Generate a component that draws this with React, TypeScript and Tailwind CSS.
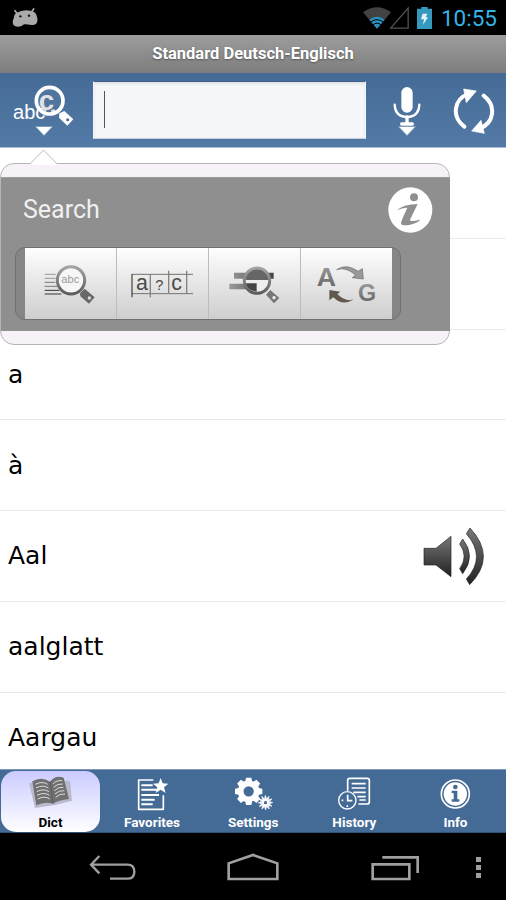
import type { ReactNode } from "react";

const words = ["", "", "a", "à", "Aal", "aalglatt", "Aargau"];

function StatusBar() {
  return (
    <div className="h-[35px] shrink-0 bg-black flex items-center pl-3 pr-[9px]">
      {/* robot head */}
      <svg className="w-[26px] h-[19px] mt-0" viewBox="0 0 78 57">
        <path d="M9 8L17 19M65 3L58 13" stroke="#aaa" strokeWidth="5" strokeLinecap="round" />
        <path d="M13 15Q34 3 58 9Q74 12 76 31Q79 52 59 51L42 49Q34 47 29 54Q13 59 5 52Q-1 41 6 29Q5 20 13 15Z" fill="#aaa" />
        <circle cx="25" cy="25" r="3.6" fill="#111" />
        <circle cx="51" cy="23" r="3.6" fill="#111" />
      </svg>

      <svg className="w-[28px] h-[22px] ml-auto" viewBox="0 0 84 66">
        <path d="M0 16Q42 -14 84 16L42 65Z" fill="#424242" />
        <path d="M19 38Q42 21 65 38L42 65Z" fill="#2c90bd" />
        <path d="M23 45Q42 31 61 45M29 54Q42 43 55 54" stroke="#000" strokeWidth="3" fill="none" />
      </svg>
      <svg className="w-[20px] h-[23px] -ml-[2px]" viewBox="0 0 60 69">
        <path d="M5 66.500L57.500 6V66.500Z" fill="none" stroke="#505050" strokeWidth="4" />
      </svg>
      <svg className="w-[15px] h-[22px] ml-2" viewBox="0 0 45 66">
        <path d="M13 0H32V5H45V66H0V5H13Z" fill="#3498bf" />
        <path d="M17 20H31L26 31H33L18 53L21 37H12Z" fill="#e8f4f8" />
      </svg>
      <span className="ml-[9px] text-[22.500px] leading-none text-[#33b5e5] mt-[1px]">10:55</span>
    </div>
  );
}

function DropArrow() {
  return (
    <svg className="w-[18px] h-[10px]" viewBox="0 0 54 30">
      <path d="M4 3H50L27 27Z" fill="#fff" stroke="#fff" strokeOpacity=".35" strokeWidth="4" />
    </svg>
  );
}

function Toolbar() {
  return (
    <div className="h-[75px] shrink-0 flex items-start bg-linear-to-b from-[#456a96] to-[#537aa6] border-b border-[#a9bdd3] pl-[13px]">
      <div className="w-[62px] pt-3 flex flex-col items-center">
        <svg className="w-[62px] h-[42px]" viewBox="0 0 186 126">
          <defs>
            <clipPath id="lens">
              <circle cx="110" cy="47" r="38" />
            </clipPath>
          </defs>
          <text x="0" y="101" fontSize="60" fill="#fff" fontFamily="Liberation Sans, sans-serif" textLength="97">abc</text>
          <circle cx="110" cy="47" r="40" fill="#50759f" />
          <g clipPath="url(#lens)" fontFamily="Liberation Sans, sans-serif">
            <text x="72" y="101" fontSize="60" fill="#dbe4ed">c</text>
            <text x="77" y="76" fontSize="83" fontWeight="bold" fill="#e2e2e2">c</text>
            <circle cx="121" cy="80" r="7" fill="#e2e2e2" />
          </g>
          <circle cx="110" cy="47" r="40" fill="none" stroke="#fff" strokeWidth="11" />
          <path d="M139 85L154 78L181 103L163 122L138 98Z" fill="#fff" />
          <circle cx="164" cy="104" r="4.500" fill="#456a96" />
        </svg>
        <div className="h-[10px] -mt-px"><DropArrow /></div>
      </div>

      <div className="w-[273px] h-[58px] mt-2 ml-[18px] bg-[#f5f7fa] border border-t-[#3e618c] border-x-[#f4f6fa] border-b-[#c4d0df] shadow-[inset_0_2px_3px_#dfe3e6] pl-[10px] pt-[9px]">
        <div className="w-px h-[37px] bg-[#555]" />
      </div>

      <div className="w-[28px] ml-[27px] pt-3 flex flex-col items-center">
        <svg className="w-[28px] h-[42px]" viewBox="0 0 84 126">
          <rect x="25" y="6" width="34" height="77" rx="17" fill="#fff" />
          <path d="M5 59Q7 96 42 96Q77 96 79 59" fill="none" stroke="#fff" strokeWidth="7" strokeLinecap="round" />
          <path d="M42 96V116M26 117H58" stroke="#fff" strokeWidth="10" strokeLinecap="round" />
        </svg>
        <div className="h-[10px] -mt-px"><DropArrow /></div>
      </div>

      <svg className="w-[42px] h-[46px] ml-8 mt-[15px]" viewBox="0 0 126 138">
        <path d="M34 116C-7 84 5 33 45 18" fill="none" stroke="#fff" strokeWidth="12" strokeLinecap="round" />
        <path d="M32 3L70 9L40 44Z" fill="#fff" stroke="#fff" strokeWidth="2" strokeLinejoin="round" />
        <path d="M92 23C133 55 121 106 81 121" fill="none" stroke="#fff" strokeWidth="12" strokeLinecap="round" />
        <path d="M94 136L56 129L84 97Z" fill="#fff" stroke="#fff" strokeWidth="2" strokeLinejoin="round" />
      </svg>
    </div>
  );
}

function ModeButton({ children }: { children: ReactNode }) {
  return (
    <button className="flex-1 border-r border-[#bdbdbd] last:border-r-0 bg-linear-to-b from-[#fefefe] to-[#cecece]">
      <svg className="w-[91px] h-[70px]" viewBox="0 0 273 210">{children}</svg>
    </button>
  );
}

function SearchPopup() {
  return (
    <div className="absolute left-0 top-[15px] w-[450px] h-[182px] rounded-[14px] border border-[#b8b5b8] bg-[#f7f2f7] py-[13px]">
      <svg className="absolute left-[28px] -top-[15px] w-[29px] h-[16px]" viewBox="0 0 29 16">
        <path d="M1 15L14.500 1L28 15V16H1Z" fill="#fff" />
        <path d="M1 14.800L14.500 1L28 14.800" fill="none" stroke="#bbb" />
      </svg>
      <div className="h-[154px] -mr-px bg-[#8f8f8f] border-t border-[#9c9c9c]">
        <div className="h-[69px] flex justify-between items-start pl-[22px] pr-[17px] pt-[9px]">
          <h2 className="text-[25px] leading-[46px] text-[#f0f0f0]">Search</h2>
          <svg className="w-[45px] h-[46px]" viewBox="0 0 135 138">
            <ellipse cx="67" cy="69" rx="66" ry="68" fill="#fff" />
            <circle cx="78" cy="31" r="12" fill="#8f8f8f" />
            <path d="M26 70Q50 51 89 51L66 98Q65 106 96 98Q94 106 67 113Q39 119 39 108Q39 103 58 62Q45 61 26 70Z" fill="#8f8f8f" />
          </svg>
        </div>

        {/* search modes */}
        <div className="ml-[14px] w-[386px] h-[73px] rounded-[10px] border border-[#707070] bg-[#858585] pl-[9px] pr-[9px] flex">
          <ModeButton>
            <defs>
              <linearGradient id="steel" x1="0" y1="0" x2="0" y2="1">
                <stop stopColor="#a4a4a4" />
                <stop offset="1" stopColor="#5c5c5c" />
              </linearGradient>
            </defs>
            <path d="M59 76H92M59 88H92" stroke="#999" strokeWidth="3" />
            <path d="M59 100H91M59 112H96" stroke="#777" strokeWidth="3" />
            <path d="M59 124H103M59 135H109" stroke="#333" strokeWidth="3" />
            <circle cx="138" cy="94" r="41" fill="#f6f6f6" stroke="url(#steel)" strokeWidth="9" />
            <text x="109" y="103" fontSize="33" fill="#999" fontFamily="Liberation Sans, sans-serif" textLength="54">abc</text>
            <path d="M165 133L179 119L209 145L192 164L166 142Z" fill="#686868" />
            <circle cx="193" cy="147" r="5" fill="#ddd" />
          </ModeButton>
          <ModeButton>
            <path d="M43 76H228M43 134H228" stroke="#737373" strokeWidth="3" />
            <path d="M45 76V145" stroke="#555048" strokeWidth="4" />
            <path d="M100 76V145M155 65V134M209 65V134" stroke="#85827d" strokeWidth="4" />
            <g fill="#4b4a48" fontFamily="Liberation Sans, sans-serif">
              <text x="57" y="124" fontSize="64">a</text>
              <text x="115" y="122" fontSize="44">?</text>
              <text x="163" y="124" fontSize="64">c</text>
            </g>
          </ModeButton>
          <ModeButton>
            <defs>
              <linearGradient id="bar">
                <stop stopColor="#999" />
                <stop offset="1" stopColor="#444" />
              </linearGradient>
            </defs>
            <path d="M75 71H194V89H75ZM61 104H144V121H61Z" fill="url(#bar)" />
            <circle cx="144" cy="95" r="36" fill="#eee" />
            <path d="M108 93A36 36 0 0 1 180 93Z" fill="#666" />
            <path d="M109 103H143V128Q116 125 109 103Z" fill="#454545" />
            <circle cx="144" cy="95" r="38" fill="none" stroke="url(#steel)" strokeWidth="9" />
            <path d="M171 137L184 123L211 147L195 163Z" fill="#777" />
            <circle cx="195" cy="146" r="5" fill="#eee" />
          </ModeButton>
          <ModeButton>
            <g fill="url(#steel)" fontWeight="bold" fontFamily="Liberation Sans, sans-serif">
              <text x="47" y="110" fontSize="80">A</text>
              <text x="171" y="155" fontSize="70">G</text>
            </g>
            <path d="M107 62Q136 42 171 67L184 59L187 90L154 86L164 78Q133 52 107 62Z" fill="#999" stroke="#666" strokeWidth="2" />
            <path d="M159 151Q125 173 97 145L85 154V123L118 128L109 135Q134 160 159 151Z" fill="#61594f" />
          </ModeButton>
        </div>
      </div>
    </div>
  );
}

function Speaker() {
  return (
    <svg className="w-[62px] h-[58px]" viewBox="0 0 186 174">
      <defs>
        <linearGradient id="sound" x1="0" y1="0" x2="0" y2="1">
          <stop stopColor="#777" />
          <stop offset="1" stopColor="#222" />
        </linearGradient>
      </defs>
      <g fill="url(#sound)" stroke="#222" strokeWidth="2">
        <path d="M3 64H39L84 28V149L39 114H3Z" />
        <path d="M119 36L110 51Q137 88 110 125L119 140Q160 88 119 36Z" />
        <path d="M141 3L130 20Q191 90 130 156L140 173Q222 90 141 3Z" />
      </g>
    </svg>
  );
}

function WordList() {
  return (
    <div className="relative flex-1 min-h-0">
      <ul className="h-full overflow-hidden bg-white">
        {words.map((word, i) => (
          <li key={i} className="h-[90.800px] border-b border-[#e9e9e9] flex items-center justify-between pl-2 pr-[21px]">
            <span className="font-['DejaVu_Sans',sans-serif] text-[25px] text-black">{word}</span>
            {word === "Aal" && <Speaker />}
          </li>
        ))}
      </ul>
      <SearchPopup />
    </div>
  );
}

function Tab({ label, active, children }: { label: string; active?: boolean; children: ReactNode }) {
  return (
    <div
      className={
        active
          ? "w-[99px] ml-px mr-[1.500px] h-[61px] rounded-[15px] bg-linear-to-b from-[#cbcbff] to-white text-black flex flex-col items-center"
          : "flex-1 h-[61px] text-white flex flex-col items-center"
      }
    >
      <svg className="w-[45px] h-[36px] mt-[4px]" viewBox="0 0 135 108">{children}</svg>
      <span className="text-[13.500px] font-bold leading-[16px] mt-[3px]">{label}</span>
    </div>
  );
}

const teeth = [0, 45, 90, 135, 180, 225, 270, 315];
const smallTeeth = [0, 30, 60, 90, 120, 150, 180, 210, 240, 270, 300, 330];

function TabBar() {
  return (
    <div className="h-[64px] shrink-0 bg-[#446a96] border-t border-[#8098b5] border-b border-b-[#2d5078] flex items-start pt-px">
      <Tab label="Dict" active>
        <path d="M3 24L126 17L132 77L84 89L21 99Z" fill="#b9b9cc" />
        <path d="M13 19Q41 3 66 20Q83 -2 107 8L123 72Q92 75 75 86Q50 79 25 91Z" fill="#707070" />
        <path d="M66 20L75 86" stroke="#555" strokeWidth="2" />
        <path
          d="M22 28Q43 17 59 28M24 39Q45 28 61 39M26 50Q47 39 63 50M27 61Q49 50 64 61M29 72Q50 61 65 72M75 27Q85 15 102 17M77 37Q89 25 104 27M79 47Q91 35 106 37M81 57Q93 45 109 47M83 67Q96 55 111 57"
          fill="none" stroke="#ddd" strokeWidth="3"
        />
      </Tab>
      <Tab label="Favorites">
        <path d="M70 15H26V103H100V61" fill="none" stroke="#fff" strokeWidth="5" strokeLinejoin="round" />
        <path d="M34 31H68M34 44H82M34 60H87M34 74H74M34 88H68" stroke="#fff" strokeWidth="6" />
        <path d="M92 9L98 25L115 26L102 37L107 54L92 44L77 54L82 37L69 26L86 25Z" fill="#fff" />
      </Tab>
      <Tab label="Settings">
        {teeth.map((a) => (
          <path key={a} d="M42 23L45 8H61L64 23Z" fill="#fff" transform={`rotate(${a} 53 49)`} />
        ))}
        <circle cx="53" cy="49" r="24" fill="none" stroke="#fff" strokeWidth="17" />
        {smallTeeth.map((a) => (
          <path key={a} d="M101 70L103 61L106 70Z" fill="#fff" stroke="#fff" strokeWidth="2" transform={`rotate(${a} 103.500 83)`} />
        ))}
        <circle cx="103.500" cy="83" r="9" fill="none" stroke="#fff" strokeWidth="8" />
      </Tab>
      <Tab label="History">
        <path d="M47 47V16Q47 10 53 10H106Q112 10 112 16V81Q112 87 106 87H79" fill="none" stroke="#fff" strokeWidth="5" />
        <path d="M59 26H101M59 39H101M64 52H101M76 65H101M82 75H101" stroke="#fff" strokeWidth="5" />
        <circle cx="46" cy="76" r="26" fill="#446a96" stroke="#fff" strokeWidth="4" />
        <path d="M47 59V77H61" stroke="#fff" strokeWidth="5" fill="none" />
        <path d="M29 76H34M46 91V96" stroke="#fff" strokeWidth="5" />
      </Tab>
      <Tab label="Info">
        <circle cx="67" cy="57" r="42" fill="none" stroke="#fff" strokeWidth="5" />
        <circle cx="67" cy="57" r="35" fill="#fff" />
        <circle cx="67" cy="36" r="7" fill="#446a96" />
        <path d="M56 47H73V73H79V80H56V73H62V54H56Z" fill="#446a96" />
      </Tab>
    </div>
  );
}

function NavBar() {
  return (
    <div className="h-[67px] shrink-0 bg-black flex items-start pl-[89px] pt-[20px]">
      <svg className="w-[47px] h-[29px]" viewBox="0 0 141 87" fill="none" stroke="#a0a0a0" strokeWidth="7">
        <path d="M31 9L6 35L31 61M6 35H115Q136 35 136 56T115 77H63" />
      </svg>
      <svg className="w-[52px] h-[29px] ml-[91px]" viewBox="0 0 156 87" fill="none" stroke="#a0a0a0" strokeWidth="8">
        <path d="M5 78V31L78 6L151 31V78Z" />
      </svg>
      <svg className="w-[48px] h-[29px] ml-[92px]" viewBox="0 0 144 87" fill="none" stroke="#a0a0a0" strokeWidth="8">
        <path d="M5 34H115V78H5ZM34 13H140V60" />
      </svg>
      <div className="ml-[57px] mt-1 flex flex-col gap-[3px]">
        <i className="size-[5px] bg-[#a0a0a0]" />
        <i className="size-[5px] bg-[#a0a0a0]" />
        <i className="size-[5px] bg-[#a0a0a0]" />
      </div>
    </div>
  );
}

export default function App() {
  return (
    <div className="w-[506px] h-[900px] overflow-hidden flex flex-col bg-white font-[Roboto,sans-serif]">
      <StatusBar />
      <h1 className="h-[38px] shrink-0 bg-linear-to-b from-[#9d9d9d] to-[#7d7d7d] text-center text-[16.500px] leading-[38px] font-bold text-white [text-shadow:0_1px_2px_#555]">
        Standard Deutsch-Englisch
      </h1>
      <Toolbar />
      <WordList />
      <TabBar />
      <NavBar />
    </div>
  );
}
